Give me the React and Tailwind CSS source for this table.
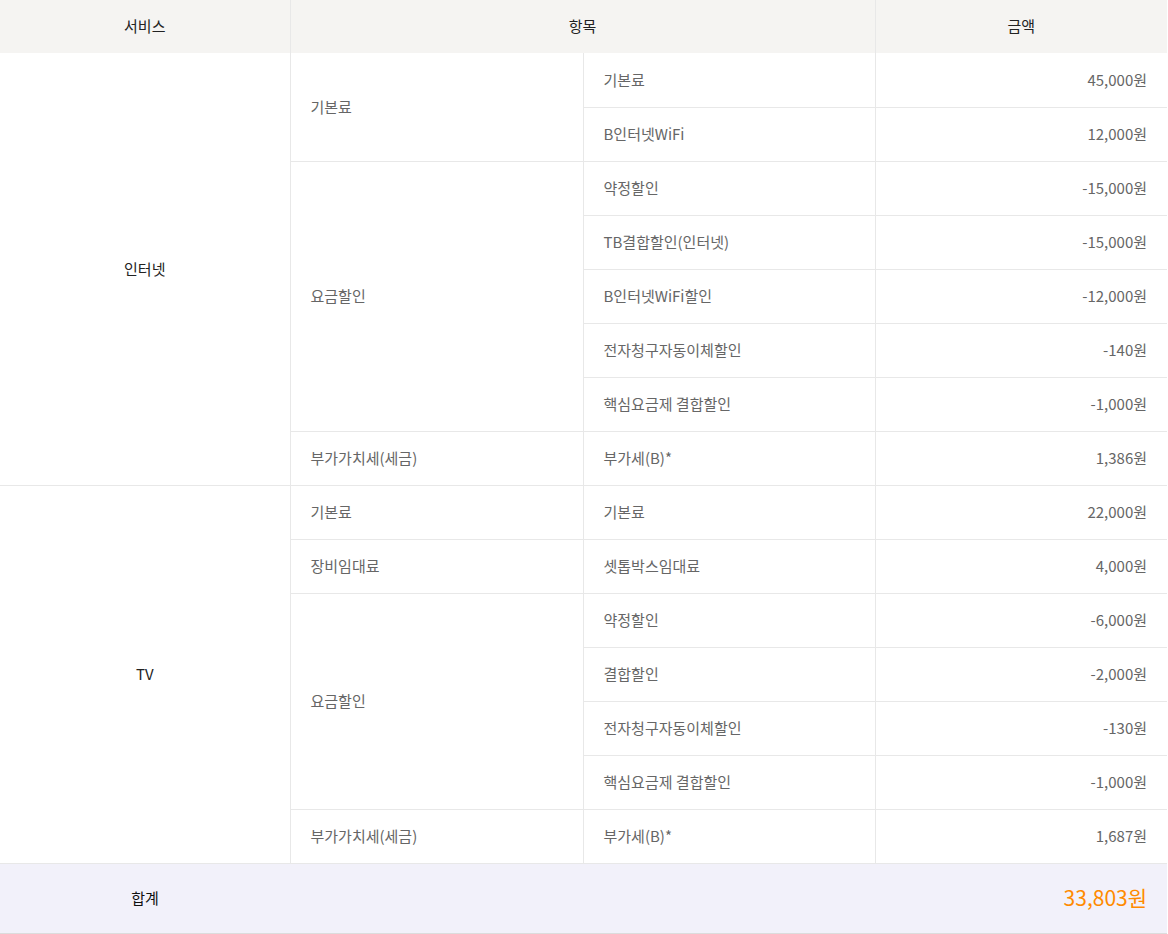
import React from "react";

const internet = [
  { group: "기본료", span: 2, name: "기본료", amount: "45,000원" },
  { name: "B인터넷WiFi", amount: "12,000원" },
  { group: "요금할인", span: 5, name: "약정할인", amount: "-15,000원" },
  { name: "TB결합할인(인터넷)", amount: "-15,000원" },
  { name: "B인터넷WiFi할인", amount: "-12,000원" },
  { name: "전자청구자동이체할인", amount: "-140원" },
  { name: "핵심요금제 결합할인", amount: "-1,000원" },
  { group: "부가가치세(세금)", span: 1, name: "부가세(B)*", amount: "1,386원" },
];

const tv = [
  { group: "기본료", span: 1, name: "기본료", amount: "22,000원" },
  { group: "장비임대료", span: 1, name: "셋톱박스임대료", amount: "4,000원" },
  { group: "요금할인", span: 4, name: "약정할인", amount: "-6,000원" },
  { name: "결합할인", amount: "-2,000원" },
  { name: "전자청구자동이체할인", amount: "-130원" },
  { name: "핵심요금제 결합할인", amount: "-1,000원" },
  { group: "부가가치세(세금)", span: 1, name: "부가세(B)*", amount: "1,687원" },
];

function Service({ label, rows }) {
  return rows.map((r, i) => (
    <tr key={label + i} className="h-[54px]">
      {i === 0 && (
        <td rowSpan={rows.length} className="border-b border-[#e8e8e8] text-center text-[#222]">
          {label}
        </td>
      )}
      {r.group && (
        <td rowSpan={r.span} className="border-b border-l border-[#e8e8e8] pl-5 text-[#666]">
          {r.group}
        </td>
      )}
      <td className="border-b border-l border-[#e8e8e8] pl-5 text-[#666]">{r.name}</td>
      <td className="border-b border-l border-[#e8e8e8] pr-5 text-right text-[#666]">{r.amount}</td>
    </tr>
  ));
}

export default function App() {
  return (
    <div className="w-[1168px] bg-white font-['Noto_Sans_CJK_KR','Noto_Sans',sans-serif] text-[15px]">
      <table className="w-[1167px] table-fixed border-collapse">
        <colgroup>
          <col className="w-[290px]" />
          <col className="w-[293px]" />
          <col className="w-[292px]" />
          <col className="w-[292px]" />
        </colgroup>
        <thead>
          <tr className="h-[53px] bg-[#f5f4f2] text-[#222]">
            <th className="font-normal">서비스</th>
            <th colSpan={2} className="border-l border-[#e8e8e8] font-normal">항목</th>
            <th className="border-l border-[#e8e8e8] font-normal">금액</th>
          </tr>
        </thead>
        <tbody>
          <Service label="인터넷" rows={internet} />
          <Service label="TV" rows={tv} />
          <tr className="h-[70px] bg-[#f2f1fa] border-t border-b border-[#dcdcdc]">
            <td className="text-center text-[#111]">합계</td>
            <td colSpan={2}></td>
            <td className="pr-5 text-right text-[21px] text-[#ff8a00]">33,803원</td>
          </tr>
        </tbody>
      </table>
    </div>
  );
}
